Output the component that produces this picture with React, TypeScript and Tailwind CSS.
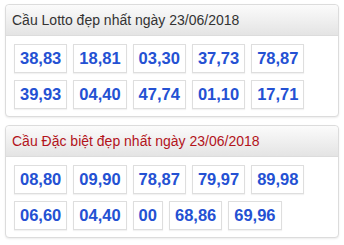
const lotto = [
  ["38,83", "18,81", "03,30", "37,73", "78,87"],
  ["39,93", "04,40", "47,74", "01,10", "17,71"],
];

const dacBiet = [
  ["08,80", "09,90", "78,87", "79,97", "89,98"],
  ["06,60", "04,40", "00", "68,86", "69,96"],
];

const Panel = ({ title, red, rows }: { title: string; red?: boolean; rows: string[][] }) => (
  <div className="rounded-[4px] border border-[#dcdcdc] bg-white shadow-[0_1px_2px_rgba(0,0,0,0.08)]">
    <div
      className={`h-[31px] flex items-center px-[6px] border-b border-[#dcdcdc] rounded-t-[4px] bg-gradient-to-b from-[#fbfbfb] to-[#e4e4e4] text-[14px] ${
        red ? "text-[#b3131b]" : "text-[#333]"
      }`}
    >
      {title}
    </div>
    <div className="flex flex-col gap-[7px] pl-[8px] pt-[8px] pb-[7px]">
      {rows.map((row, i) => (
        <div key={i} className="flex gap-[6px]">
          {row.map((n, j) => (
            <div
              key={j}
              className="h-[29px] px-[5px] flex items-center justify-center border border-[#dedede] bg-white text-[16.5px] font-bold text-[#2451d3] shadow-[0_1px_1px_rgba(0,0,0,0.05)]"
            >
              {n}
            </div>
          ))}
        </div>
      ))}
    </div>
  </div>
);

export default function App() {
  return (
    <div className="w-[344px] h-[245px] bg-white pl-[5px] pr-[5px] pt-[4px] flex flex-col gap-[8px] font-['Liberation_Sans',Arial,sans-serif]">
      <Panel title="Cầu Lotto đẹp nhất ngày 23/06/2018" rows={lotto} />
      <Panel title="Cầu Đặc biệt đẹp nhất ngày 23/06/2018" red rows={dacBiet} />
    </div>
  );
}
